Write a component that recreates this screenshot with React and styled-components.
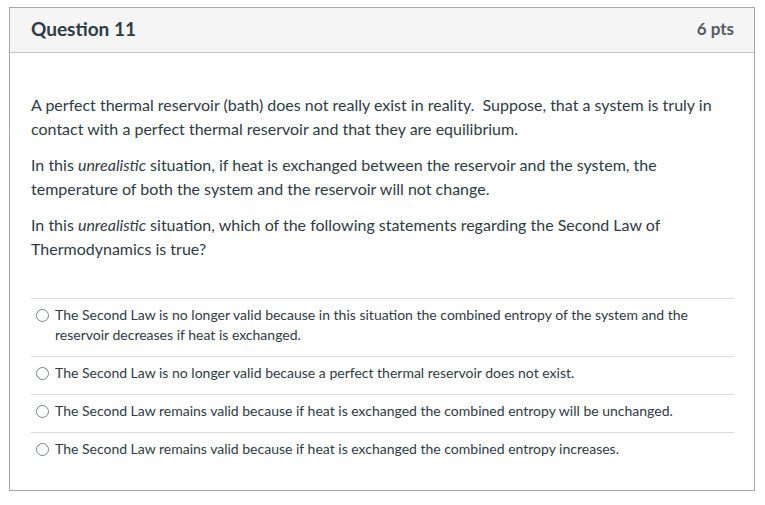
import React from "react";
import styled, { createGlobalStyle } from "styled-components";

const Global = createGlobalStyle`
  html, body { margin: 0; padding: 0; background: #fff; }
  body { font-family: Lato, "Noto Sans", sans-serif; color: #2d3b45; }
`;

const Page = styled.div`
  padding: 7px 11px 0 9px;
`;

const Card = styled.div`
  width: 744px;
  border: 1px solid #a8a8a8;
  box-sizing: content-box;
`;

const Header = styled.div`
  display: flex;
  justify-content: space-between;
  align-items: center;
  height: 41px;
  padding: 0 20px 3px 21px;
  background: #f5f5f5;
  border-bottom: 1px solid #c7c7c7;
`;

const Title = styled.h2`
  margin: 0;
  font-size: 19px;
  font-weight: 700;
  color: #2d3b45;
`;

const Points = styled.div`
  font-size: 17px;
  font-weight: 700;
  color: #555c61;
`;

const Body = styled.div`
  padding: 40px 20px 20px 21px;
`;

const Para = styled.p`
  margin: 0 0 12px;
  font-size: 16px;
  line-height: 24px;
`;

const Answers = styled.div`
  margin-top: 37px;
  border-top: 1px solid #dcdcdc;
`;

const Row = styled.label`
  display: flex;
  align-items: flex-start;
  gap: 6px;
  padding: 6px 0 11px 5px;
  font-size: 14px;
  line-height: 20px;
  border-bottom: ${(p) => (p.$last ? "none" : "1px solid #dcdcdc")};
`;

const Radio = styled.span`
  flex: none;
  width: 11px;
  height: 11px;
  margin-top: 4px;
  border: 1px solid #7b8288;
  border-radius: 50%;
  background: #fff;
`;

const answers = [
  "The Second Law is no longer valid because in this situation the combined entropy of the system and the reservoir decreases if heat is exchanged.",
  "The Second Law is no longer valid because a perfect thermal reservoir does not exist.",
  "The Second Law remains valid because if heat is exchanged the combined entropy will be unchanged.",
  "The Second Law remains valid because if heat is exchanged the combined entropy increases.",
];

export default function App() {
  return (
    <>
      <Global />
      <Page>
        <Card>
          <Header>
            <Title>Question 11</Title>
            <Points>6 pts</Points>
          </Header>
          <Body>
            <Para>
              A perfect thermal reservoir (bath) does not really exist in reality.&nbsp; Suppose, that a system is truly in
              contact with a perfect thermal reservoir and that they are equilibrium.
            </Para>
            <Para>
              In this <em>unrealistic</em> situation, if heat is exchanged between the reservoir and the system, the
              temperature of both the system and the reservoir will not change.
            </Para>
            <Para>
              In this <em>unrealistic</em> situation, which of the following statements regarding the Second Law of
              Thermodynamics is true?
            </Para>
            <Answers>
              {answers.map((a, i) => (
                <Row key={i} $last={i === answers.length - 1}>
                  <Radio />
                  <span>{a}</span>
                </Row>
              ))}
            </Answers>
          </Body>
        </Card>
      </Page>
    </>
  );
}
